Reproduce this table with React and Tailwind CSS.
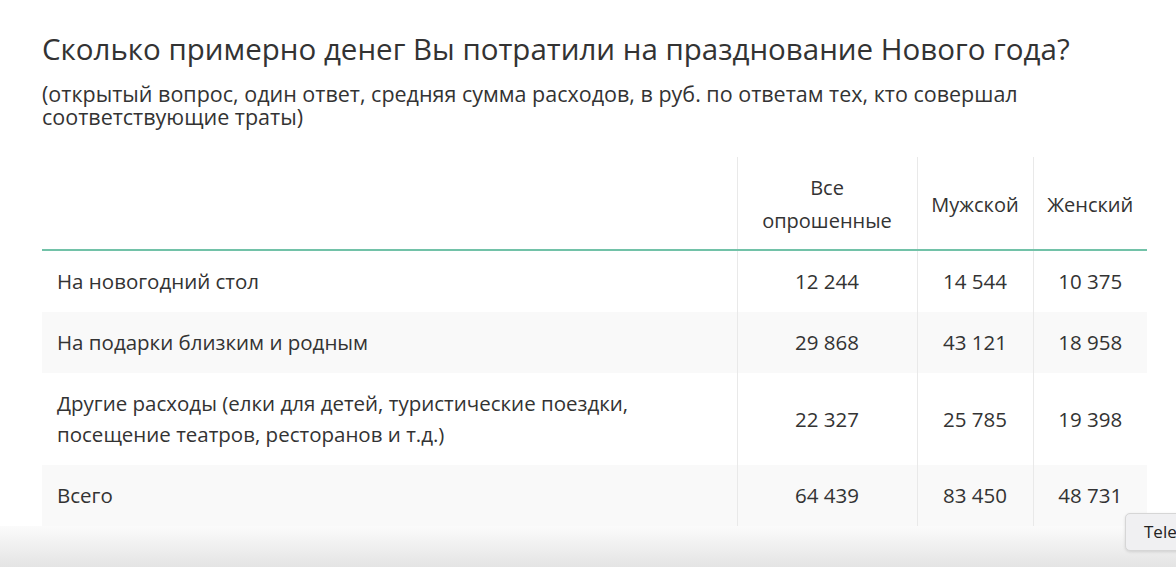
import React from 'react';

const rows = [
  { label: ['На новогодний стол'], values: ['12 244', '14 544', '10 375'], shaded: false },
  { label: ['На подарки близким и родным'], values: ['29 868', '43 121', '18 958'], shaded: true },
  {
    label: ['Другие расходы (елки для детей, туристические поездки,', 'посещение театров, ресторанов и т.д.)'],
    values: ['22 327', '25 785', '19 398'],
    shaded: false
  },
  { label: ['Всего'], values: ['64 439', '83 450', '48 731'], shaded: true }
];

function App() {
  return (
    <div className="relative w-[1176px] h-[567px] overflow-hidden bg-white text-[#333] font-['Open_Sans',_Arial,_sans-serif]">
      <div className="pl-[42px] pr-[29px] pt-[30px] h-[526px]">
        {/* Heading */}
        <h1 className="text-[29.5px] leading-[38px]">
          Сколько примерно денег Вы потратили на празднование Нового года?
        </h1>
        <p className="mt-[14px] text-[21.5px] leading-[23px] w-[1040px]">
          (открытый вопрос, один ответ, средняя сумма расходов, в руб. по ответам тех, кто совершал соответствующие траты)
        </p>

        {/* Table */}
        <table className="mt-[29px] w-[1105px] border-collapse text-[20.5px] leading-[31px]">
          <thead>
            <tr className="border-b-2 border-[#72c2a8]">
              <th className="w-[695px] p-0"></th>
              <th className="w-[180px] border-l border-[#e9e9e9] pt-[14px] pb-[12px] leading-[33px] text-[20px] font-normal text-center">
                Все<br />опрошенные
              </th>
              <th className="w-[116px] border-l border-[#e9e9e9] pt-[14px] pb-[12px] leading-[33px] text-[20px] font-normal text-center">Мужской</th>
              <th className="w-[114px] border-l border-[#e9e9e9] pt-[14px] pb-[12px] leading-[33px] text-[20px] font-normal text-center">Женский</th>
            </tr>
          </thead>
          <tbody>
            {rows.map((row, i) => (
              <tr key={i} className={row.shaded ? 'bg-[#f9f9f9]' : 'bg-white'}>
                <td className="pl-[15px] py-[15px] align-middle">
                  {row.label.map((line, j) => (
                    <div key={j}>{line}</div>
                  ))}
                </td>
                {row.values.map((v, j) => (
                  <td key={j} className="border-l border-[#e9e9e9] text-center align-middle py-[15px]">
                    {v}
                  </td>
                ))}
              </tr>
            ))}
          </tbody>
        </table>
      </div>

      {/* Bottom browser shade */}
      <div className="h-[41px] bg-gradient-to-b from-[#fbfbfb] to-[#e4e4e4]"></div>

      {/* Tooltip peeking at the edge */}
      <div className="absolute left-[1125px] top-[513px] h-[38px] w-[70px] rounded-[5px] border border-[#d6d6d6] bg-[#f0f0f2] pl-[18px] pt-[7px] text-[17px] leading-[22px] text-[#222] shadow-[0_1px_3px_rgba(0,0,0,0.12)]">
        Tele
      </div>
    </div>
  );
}

export default App;
